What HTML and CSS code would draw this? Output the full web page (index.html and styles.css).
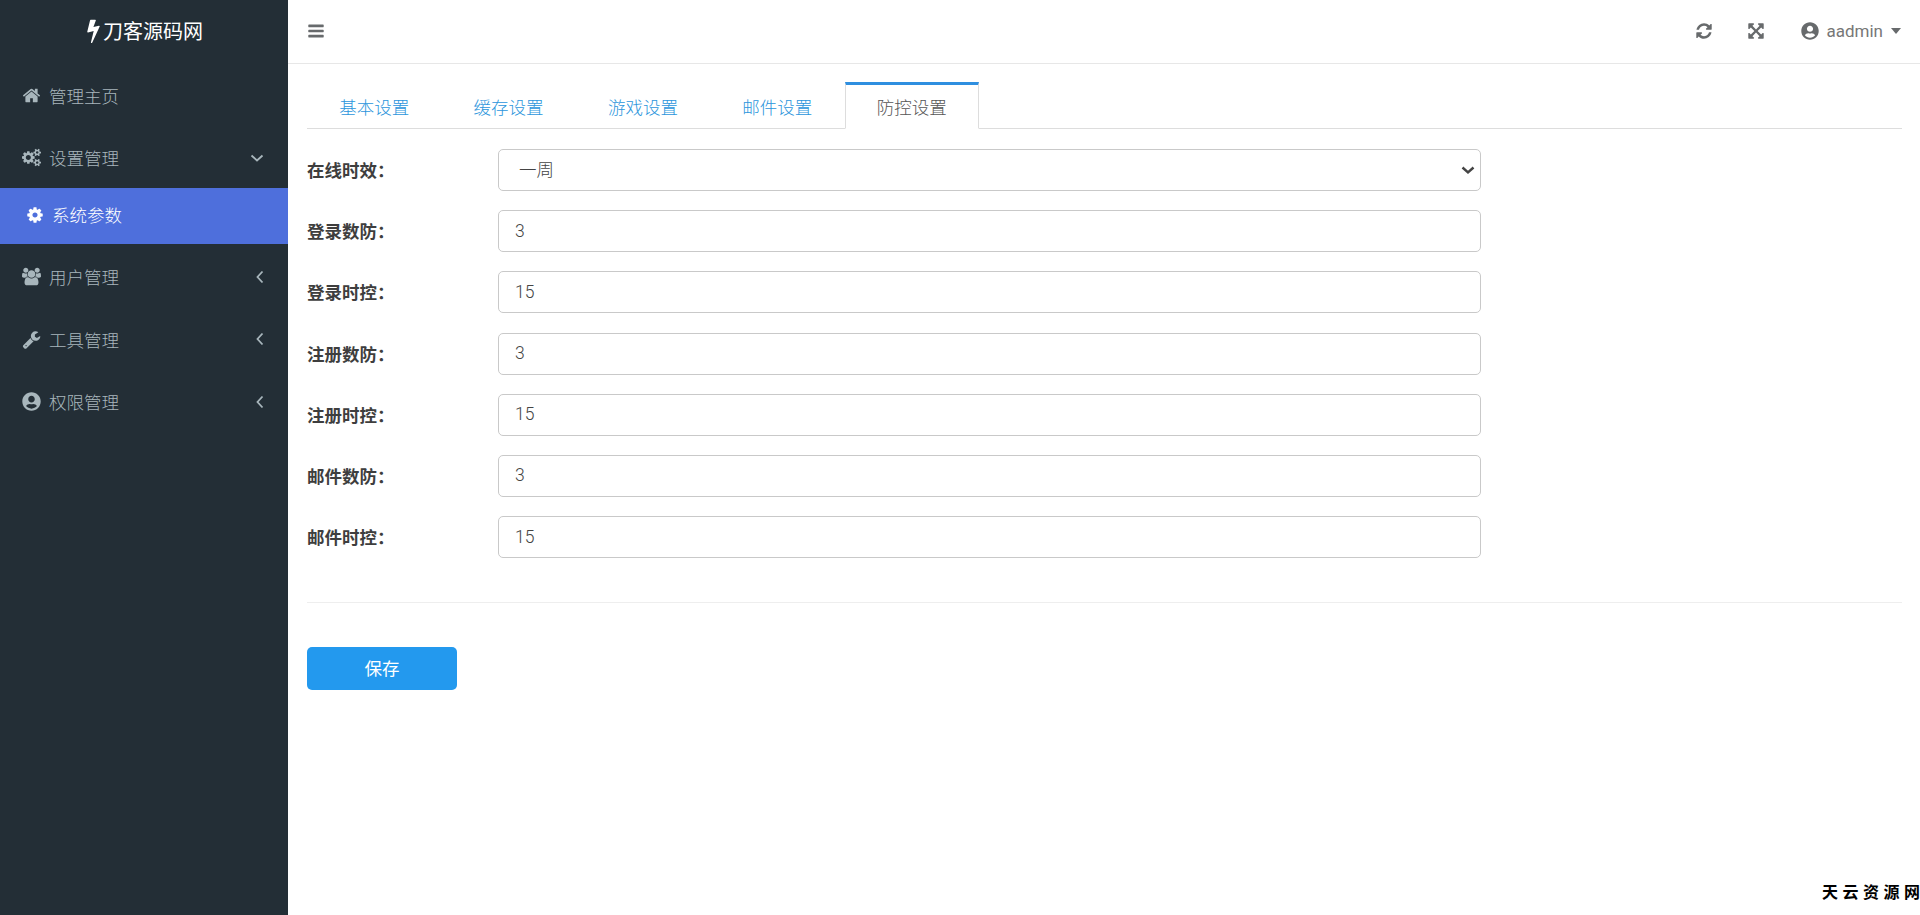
FILE: index.html
```html
<!DOCTYPE html>
<html lang="zh-CN">
<head>
<meta charset="utf-8">
<title>刀客源码网</title>
<link rel="stylesheet" href="styles.css">
</head>
<body>
<svg class="defs" width="0" height="0" aria-hidden="true">
  <symbol id="i-bolt" viewBox="0 0 1792 1792"><path d="M1333 566q18 20 7 44l-540 1157q-13 25-42 25-4 0-14-2-17-5-25.5-19t-4.5-30l197-808-406 101q-4 1-12 1-18 0-31-11-18-15-13-39l201-825q4-14 16-23t28-9h328q19 0 32 12.5t13 29.5q0 8-5 18l-171 463 396-98q8-2 12-2 19 0 34 15z"/></symbol>
  <symbol id="i-home" viewBox="0 0 1792 1792"><path d="M1472 992v480q0 26-19 45t-45 19h-384v-384h-256v384h-384q-26 0-45-19t-19-45v-480q0-1 .5-3t.5-3l575-474 575 474q1 2 1 6zm223-69l-62 74q-8 9-21 11h-3q-13 0-21-7l-692-577-692 577q-12 8-24 7-13-2-21-11l-62-74q-8-10-7-23.5t11-21.5l719-599q32-26 76-26t76 26l244 204v-195q0-14 9-23t23-9h192q14 0 23 9t9 23v408l219 182q10 8 11 21.5t-7 23.5z"/></symbol>
  <symbol id="i-cogs" viewBox="0 0 1920 1792"><path d="M896 896q0-106-75-181t-181-75-181 75-75 181 75 181 181 75 181-75 75-181zm768 512q0-52-38-90t-90-38-90 38-38 90q0 53 37.5 90.5t90.5 37.5 90.5-37.5 37.5-90.5zm0-1024q0-52-38-90t-90-38-90 38-38 90q0 53 37.5 90.5t90.5 37.5 90.5-37.5 37.5-90.5zm-384 421v185q0 10-7 19.5t-16 10.5l-155 24q-11 35-32 76 34 48 90 115 7 11 7 20 0 12-7 19-23 30-82.5 89.5t-78.5 59.5q-11 0-21-7l-115-90q-37 19-77 31-11 108-23 155-7 24-30 24h-186q-11 0-20-7.5t-10-17.5l-23-153q-34-10-75-31l-118 89q-7 7-20 7-11 0-21-8-144-133-144-160 0-9 7-19 10-14 41-53t47-61q-23-44-35-82l-152-24q-10-1-17-9.5t-7-19.5v-185q0-10 7-19.5t16-10.5l155-24q11-35 32-76-34-48-90-115-7-11-7-20 0-12 7-20 22-30 82-89t79-59q11 0 21 7l115 90q34-18 77-32 11-108 23-154 7-24 30-24h186q11 0 20 7.5t10 17.5l23 153q34 10 75 31l118-89q8-7 20-7 11 0 21 8 144 133 144 160 0 8-7 19-12 16-42 54t-45 60q23 48 34 82l152 23q10 2 17 10.5t7 19.5zm640 533v140q0 16-149 31-12 27-30 52 51 113 51 138 0 4-4 7-122 71-124 71-8 0-46-47t-52-68q-20 2-30 2t-30-2q-14 21-52 68t-46 47q-2 0-124-71-4-3-4-7 0-25 51-138-18-25-30-52-149-15-149-31v-140q0-16 149-31 13-29 30-52-51-113-51-138 0-4 4-7 4-2 35-20t59-34 30-16q8 0 46 46.5t52 67.5q20-2 30-2t30 2q51-71 92-112l6-2q4 0 124 70 4 3 4 7 0 25-51 138 17 23 30 52 149 15 149 31zm0-1024v140q0 16-149 31-12 27-30 52 51 113 51 138 0 4-4 7-122 71-124 71-8 0-46-47t-52-68q-20 2-30 2t-30-2q-14 21-52 68t-46 47q-2 0-124-71-4-3-4-7 0-25 51-138-18-25-30-52-149-15-149-31v-140q0-16 149-31 13-29 30-52-51-113-51-138 0-4 4-7 4-2 35-20t59-34 30-16q8 0 46 46.5t52 67.5q20-2 30-2t30 2q51-71 92-112l6-2q4 0 124 70 4 3 4 7 0 25-51 138 17 23 30 52 149 15 149 31z"/></symbol>
  <symbol id="i-cog" viewBox="0 0 1792 1792"><path d="M1152 896q0-106-75-181t-181-75-181 75-75 181 75 181 181 75 181-75 75-181zm512-109v222q0 12-8 23t-20 13l-185 28q-19 54-39 91 35 50 107 138 10 12 10 25t-9 23q-27 37-99 108t-94 71q-12 0-26-9l-138-108q-44 23-91 38-16 136-29 186-7 28-36 28h-222q-14 0-24.5-8.5t-11.5-21.5l-28-184q-49-16-90-37l-141 107q-10 9-25 9-14 0-25-11-126-114-165-168-7-10-7-23 0-12 8-23 15-21 51-66.5t54-70.5q-27-50-41-99l-183-27q-13-2-21-12.5t-8-23.5v-222q0-12 8-23t19-13l186-28q14-46 39-92-40-57-107-138-10-12-10-24 0-10 9-23 26-36 98.5-107.5t94.5-71.5q13 0 26 10l138 107q44-23 91-38 16-136 29-186 7-28 36-28h222q14 0 24.5 8.5t11.5 21.5l28 184q49 16 90 37l142-107q9-9 24-9 13 0 25 10 129 119 165 170 7 8 7 22 0 12-8 23-15 21-51 66.5t-54 70.5q26 50 41 98l183 28q13 2 21 12.5t8 23.5z"/></symbol>
  <symbol id="i-users" viewBox="0 0 1920 1792"><path d="M593 896q-162 5-265 128h-134q-82 0-138-40.5t-56-118.5q0-353 124-353 6 0 43.5 21t97.5 42.5 119 21.5q67 0 133-23-5 37-5 66 0 139 81 256zm1071 637q0 120-73 189.5t-194 69.5h-874q-121 0-194-69.5t-73-189.5q0-53 3.5-103.5t14-109 26.5-108.5 43-97.5 62-81 85.5-53.5 111.5-20q10 0 43 21.5t73 48 107 48 135 21.5 135-21.5 107-48 73-48 43-21.5q61 0 111.5 20t85.5 53.5 62 81 43 97.5 26.5 108.5 14 109 3.5 103.5zm-1024-1277q0 106-75 181t-181 75-181-75-75-181 75-181 181-75 181 75 75 181zm704 384q0 159-112.5 271.5t-271.5 112.5-271.5-112.5-112.5-271.5 112.5-271.5 271.5-112.5 271.5 112.5 112.5 271.5zm576 225q0 78-56 118.5t-138 40.5h-134q-103-123-265-128 81-117 81-256 0-29-5-66 66 23 133 23 59 0 119-21.5t97.5-42.5 43.5-21q124 0 124 353zm-128-609q0 106-75 181t-181 75-181-75-75-181 75-181 181-75 181 75 75 181z"/></symbol>
  <symbol id="i-wrench" viewBox="0 0 1792 1792"><path d="M448 1472q0-26-19-45t-45-19-45 19-19 45 19 45 45 19 45-19 19-45zm644-420l-682 682q-37 37-90 37-52 0-91-37l-106-108q-38-36-38-90 0-53 38-91l681-681q39 98 114.5 173.5t173.5 114.5zm634-435q0 39-23 106-47 134-164.5 217.5t-258.5 83.5q-185 0-316.5-131.5t-131.5-316.5 131.5-316.5 316.5-131.5q58 0 121.5 16.5t107.5 46.5q16 11 16 28t-16 28l-293 169v224l193 107q5-3 79-48.5t135.5-81 70.5-35.5q15 0 23.5 10t8.5 25z"/></symbol>
  <symbol id="i-user" viewBox="0 0 496 512"><path d="M248 8C111 8 0 119 0 256s111 248 248 248 248-111 248-248S385 8 248 8zm0 96c48.6 0 88 39.4 88 88s-39.4 88-88 88-88-39.4-88-88 39.4-88 88-88zm0 344c-58.7 0-111.3-26.6-146.5-68.2 18.8-35.4 55.6-59.8 98.5-59.8 2.4 0 4.8.4 7.1 1.1 13 4.2 26.6 6.9 40.9 6.9 14.3 0 28-2.7 40.9-6.9 2.3-.7 4.7-1.1 7.1-1.1 42.9 0 79.7 24.4 98.5 59.8C359.3 421.4 306.7 448 248 448z"/></symbol>
  <symbol id="i-bars" viewBox="0 0 1792 1792"><path d="M1664 1344v128q0 26-19 45t-45 19h-1408q-26 0-45-19t-19-45v-128q0-26 19-45t45-19h1408q26 0 45 19t19 45zm0-512v128q0 26-19 45t-45 19h-1408q-26 0-45-19t-19-45v-128q0-26 19-45t45-19h1408q26 0 45 19t19 45zm0-512v128q0 26-19 45t-45 19h-1408q-26 0-45-19t-19-45v-128q0-26 19-45t45-19h1408q26 0 45 19t19 45z"/></symbol>
  <symbol id="i-refresh" viewBox="0 0 1792 1792"><path d="M1639 1056q0 5-1 7-64 268-268 434.5t-478 166.5q-146 0-282.5-55t-243.5-157l-129 129q-19 19-45 19t-45-19-19-45v-448q0-26 19-45t45-19h448q26 0 45 19t19 45-19 45l-137 137q71 66 161 102t187 36q134 0 250-65t186-179q11-17 53-117 8-23 30-23h192q13 0 22.5 9.5t9.5 22.5zm25-800v448q0 26-19 45t-45 19h-448q-26 0-45-19t-19-45 19-45l138-138q-148-137-349-137-134 0-250 65t-186 179q-11 17-53 117-8 23-30 23h-199q-13 0-22.5-9.5t-9.5-22.5v-7q65-268 270-434.5t480-166.5q146 0 284 55.5t245 156.5l130-129q19-19 45-19t45 19 19 45z"/></symbol>
  <symbol id="i-expand" viewBox="0 0 1792 1792"><path d="M1411 541l-355 355 355 355 144-144q29-31 70-14 39 17 39 59v448q0 26-19 45t-45 19h-448q-42 0-59-40-17-39 14-69l144-144-355-355-355 355 144 144q31 30 14 69-17 40-59 40h-448q-26 0-45-19t-19-45v-448q0-42 40-59 39-17 69 14l144 144 355-355-355-355-144 144q-19 19-45 19-12 0-24-5-40-17-40-59v-448q0-26 19-45t45-19h448q42 0 59 40 17 39-14 69l-144 144 355 355 355-355-144-144q-31-30-14-69 17-40 59-40h448q26 0 45 19t19 45v448q0 42-39 59-13 5-25 5-26 0-45-19z"/></symbol>
  <symbol id="i-left" viewBox="0 0 10 16"><path d="M7.500 2.500 2.500 8l5 5.500" fill="none" stroke="currentColor" stroke-width="1.8"/></symbol>
  <symbol id="i-down" viewBox="0 0 16 10"><path d="M2.500 2.500 8 7.500l5.500-5" fill="none" stroke="currentColor" stroke-width="1.8"/></symbol>
</svg>

<div class="app">
  <aside class="sidebar">
    <div class="logo"><svg class="logo-icon"><use href="#i-bolt"/></svg><span>刀客源码网</span></div>
    <nav class="menu">
      <a class="menu-item"><svg class="mi"><use href="#i-home"/></svg><span>管理主页</span></a>
      <a class="menu-item menu-open"><svg class="mi"><use href="#i-cogs"/></svg><span>设置管理</span><svg class="chev-down"><use href="#i-down"/></svg></a>
      <a class="menu-sub"><svg class="mi-sub"><use href="#i-cog"/></svg><span>系统参数</span></a>
      <a class="menu-item"><svg class="mi"><use href="#i-users"/></svg><span>用户管理</span><svg class="chev-left"><use href="#i-left"/></svg></a>
      <a class="menu-item"><svg class="mi"><use href="#i-wrench"/></svg><span>工具管理</span><svg class="chev-left"><use href="#i-left"/></svg></a>
      <a class="menu-item"><svg class="mi"><use href="#i-user"/></svg><span>权限管理</span><svg class="chev-left"><use href="#i-left"/></svg></a>
    </nav>
  </aside>

  <main class="main">
    <header class="topbar">
      <svg class="tb-bars"><use href="#i-bars"/></svg>
      <div class="tb-right">
        <svg class="tb-icon"><use href="#i-refresh"/></svg>
        <svg class="tb-icon"><use href="#i-expand"/></svg>
        <div class="tb-user"><svg class="tb-avatar"><use href="#i-user"/></svg><span>aadmin</span><i class="caret"></i></div>
      </div>
    </header>

    <section class="content">
      <div class="tabs">
        <a class="tab">基本设置</a>
        <a class="tab">缓存设置</a>
        <a class="tab">游戏设置</a>
        <a class="tab">邮件设置</a>
        <a class="tab tab-active">防控设置</a>
      </div>

      <form class="form">
        <div class="row"><label class="lbl">在线时效：</label><select class="ctl ctl-select"><option>一周</option></select></div>
        <div class="row"><label class="lbl">登录数防：</label><input class="ctl" value="3"></div>
        <div class="row"><label class="lbl">登录时控：</label><input class="ctl" value="15"></div>
        <div class="row"><label class="lbl">注册数防：</label><input class="ctl" value="3"></div>
        <div class="row"><label class="lbl">注册时控：</label><input class="ctl" value="15"></div>
        <div class="row"><label class="lbl">邮件数防：</label><input class="ctl" value="3"></div>
        <div class="row"><label class="lbl">邮件时控：</label><input class="ctl" value="15"></div>
        <hr class="divider">
        <button type="button" class="save">保存</button>
      </form>
    </section>
  </main>
</div>
<div class="watermark">天云资源<span class="watermark-end">网</span></div>
</body>
</html>
```

FILE: styles.css
```css
* { box-sizing: border-box; }
html, body { margin: 0; height: 100%; overflow: hidden; }
body {
  font-family: "Roboto", "Noto Sans CJK SC", sans-serif;
  background: #fff;
  color: #676a6c;
}
.defs { position: absolute; }
.app { display: flex; height: 915px; }

.sidebar { width: 288px; flex: none; background: #232e36; }
.logo {
  height: 64.5px;
  display: flex;
  align-items: center;
  justify-content: center;
  padding: 0 4px 4px 0;
  color: #fff;
  font-size: 20px;
  font-family: "Noto Sans CJK SC", sans-serif;
}
.logo-icon { width: 25px; height: 25px; fill: #fff; margin-right: -3px; }
.menu { display: flex; flex-direction: column; }
.menu-item {
  height: 62.5px;
  display: flex;
  align-items: center;
  padding: 0 20px 0 22px;
  color: #a8b6bc;
  font-size: 17.5px;
  font-weight: 300;
  font-family: "Noto Sans CJK SC", sans-serif;
}
.menu-open { height: 61px; }
.mi { width: 19px; height: 19px; fill: #a8b6bc; margin-right: 8px; flex: none; }
.chev-left { width: 10px; height: 16px; margin-left: auto; margin-right: 3px; color: #a8b6bc; }
.chev-down { width: 16px; height: 10px; margin-left: auto; margin-right: 3px; color: #a8b6bc; }
.menu-sub {
  height: 56px;
  margin-bottom: 1.500px;
  display: flex;
  align-items: center;
  padding: 0 0 3px 26px;
  background: #4e6fdc;
  color: #fff;
  font-size: 17.5px;
  font-weight: 300;
  font-family: "Noto Sans CJK SC", sans-serif;
}
.mi-sub { width: 18px; height: 18px; fill: #fff; margin-right: 8px; flex: none; }

.main { flex: 1; min-width: 0; }
.topbar {
  height: 64px;
  border-bottom: 1px solid #e7e7e7;
  display: flex;
  align-items: center;
  justify-content: space-between;
  padding: 0 19px 2px 19px;
}
.tb-bars { width: 18px; height: 18px; fill: #676a6c; }
.tb-right { display: flex; align-items: center; }
.tb-icon { width: 18px; height: 18px; fill: #676a6c; margin-right: 34px; }
.tb-user { display: flex; align-items: center; margin-left: 2px; font-size: 17px; color: #777; }
.tb-avatar { width: 18px; height: 18px; fill: #676a6c; margin-right: 7px; }
.caret {
  width: 0; height: 0;
  margin-left: 8px;
  border-left: 5px solid transparent;
  border-right: 5px solid transparent;
  border-top: 6px solid #676a6c;
}

.content { padding: 18px 18px 0 19px; }
.tabs { display: flex; height: 47px; border-bottom: 1px solid #ddd; }
.tab {
  width: 134.4px;
  height: 47px;
  display: flex;
  align-items: center;
  justify-content: center;
  padding-top: 1px;
  font-size: 17.5px;
  font-weight: 300;
  color: #2b95dc;
  font-family: "Noto Sans CJK SC", sans-serif;
}
.tab-active {
  color: #555;
  border: 1px solid #ddd;
  border-top: 3px solid #2f8fe0;
  border-bottom: 1px solid #fff;
  padding-top: 0;
}

.form { display: flex; flex-direction: column; gap: 19.2px; padding-top: 20px; }
.row { display: flex; align-items: center; height: 42px; }
.lbl {
  width: 191px;
  flex: none;
  font-size: 17.5px;
  font-weight: 700;
  color: #3e3e3e;
  font-family: "Noto Sans CJK SC", sans-serif;
  padding-bottom: 1px;
}
.ctl {
  width: 983px;
  height: 42px;
  border: 1px solid #c9c9c9;
  border-radius: 5px;
  background: #fff;
  padding: 0 15px 1px 16px;
  font-size: 17.5px;
  font-weight: 300;
  color: #444;
  font-family: "Roboto", "Noto Sans CJK SC", sans-serif;
  outline: none;
}
.ctl-select {
  appearance: none;
  padding-left: 20px;
  background-image: url("data:image/svg+xml,%3Csvg xmlns='http://www.w3.org/2000/svg' width='14' height='9'%3E%3Cpath d='M1.500 1.500 7 6.500l5.500-5' fill='none' stroke='%23444' stroke-width='2.4'/%3E%3C/svg%3E");
  background-repeat: no-repeat;
  background-position: right 5px center;
}
.divider { width: 100%; border: 0; border-top: 1px solid #eee; margin: 25px 0 24px; }
.save {
  width: 150px;
  height: 43px;
  border: 0;
  border-radius: 5px;
  padding: 0 0 2px;
  background: #2399ee;
  color: #fff;
  font-size: 17.5px;
  font-weight: 400;
  font-family: "Noto Sans CJK SC", sans-serif;
}

.watermark {
  position: absolute;
  left: 1822px;
  top: 879px;
  font-family: "Noto Sans CJK SC", sans-serif;
  font-size: 16px;
  font-weight: 700;
  letter-spacing: 4.5px;
  color: #000;
  white-space: nowrap;
}
.watermark-end { letter-spacing: 0; }
```
